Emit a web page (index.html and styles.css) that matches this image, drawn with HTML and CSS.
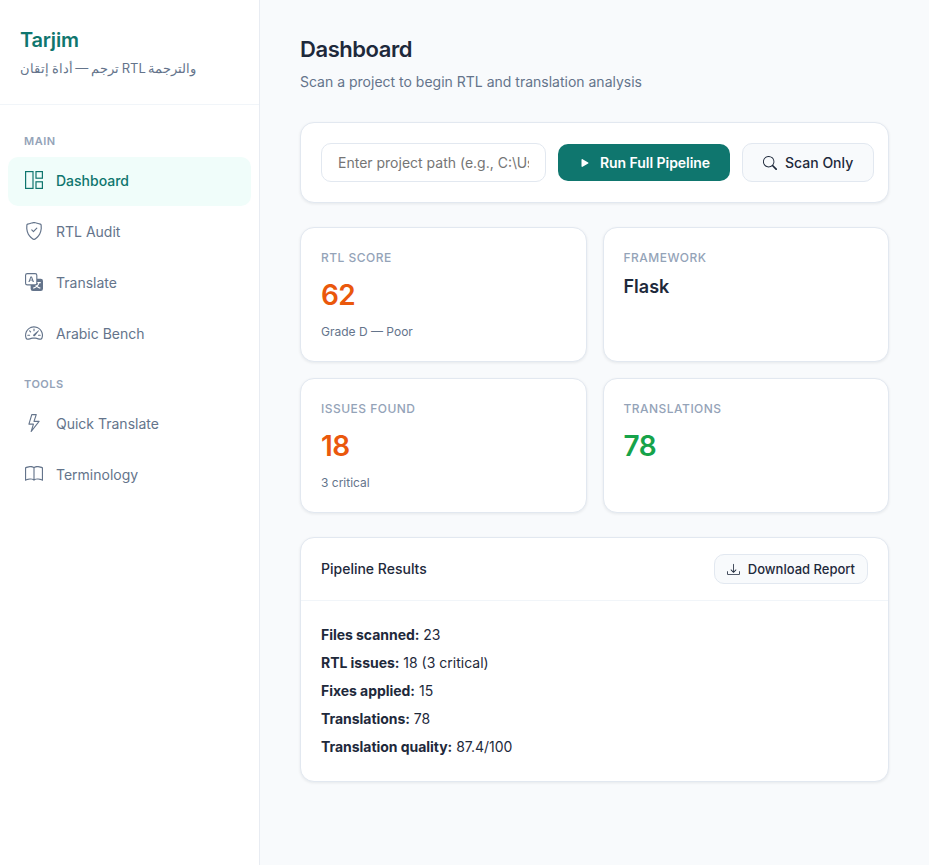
FILE: index.html
```html
<!DOCTYPE html>
<html lang="en">
<head>
<meta charset="utf-8">
<title>Tarjim Dashboard</title>
<link rel="stylesheet" href="styles.css">
</head>
<body>
<div class="app">
  <aside class="sidebar">
    <div class="brand">
      <div class="brand-name">Tarjim</div>
      <div class="brand-sub" dir="rtl">والترجمة RTL ترجم — أداة إتقان</div>
    </div>
    <nav class="nav">
      <div class="nav-label">Main</div>
      <a class="nav-item active">
        <svg class="nav-icon" viewBox="0 0 18 18" fill="none" stroke="currentColor" stroke-width="1.2"><rect x="0.6" y="0.6" width="7.4" height="16.8"/><rect x="11" y="0.6" width="6.4" height="6.6"/><rect x="11" y="10.8" width="6.4" height="6.6"/></svg>
        <span>Dashboard</span>
      </a>
      <a class="nav-item">
        <svg class="nav-icon" viewBox="0 0 16 16" fill="currentColor"><path d="M5.338 1.59a61 61 0 0 0-2.837.856.48.48 0 0 0-.328.39c-.554 4.157.726 7.19 2.253 9.188a10.7 10.7 0 0 0 2.287 2.233c.346.244.652.42.893.533q.18.085.293.118a1 1 0 0 0 .101.025 1 1 0 0 0 .1-.025q.114-.034.294-.118c.24-.113.547-.29.893-.533a10.7 10.7 0 0 0 2.287-2.233c1.527-1.997 2.807-5.031 2.253-9.188a.48.48 0 0 0-.328-.39c-.651-.213-1.75-.56-2.837-.855C9.552 1.29 8.531 1.067 8 1.067c-.53 0-1.552.223-2.662.524zM5.072.56C6.157.265 7.31 0 8 0s1.843.265 2.928.56c1.11.3 2.229.655 2.887.87a1.54 1.54 0 0 1 1.044 1.262c.596 4.477-.787 7.795-2.465 9.99a11.8 11.8 0 0 1-2.517 2.453 7 7 0 0 1-1.048.625c-.28.132-.581.24-.829.24s-.548-.108-.829-.24a7 7 0 0 1-1.048-.625 11.8 11.8 0 0 1-2.517-2.453C1.928 10.487.545 7.169 1.141 2.692A1.54 1.54 0 0 1 2.185 1.43 63 63 0 0 1 5.072.56"/><path d="M10.854 5.146a.5.5 0 0 1 0 .708l-3 3a.5.5 0 0 1-.708 0l-1.5-1.5a.5.5 0 1 1 .708-.708L7.5 7.793l2.646-2.647a.5.5 0 0 1 .708 0"/></svg>
        <span>RTL Audit</span>
      </a>
      <a class="nav-item">
        <svg class="nav-icon" viewBox="0 0 16 16" fill="currentColor"><path d="M4.545 6.714 4.11 8H3l1.862-5h1.284L8 8H6.833l-.435-1.286zm1.634-.736L5.5 3.956h-.049l-.679 2.022z"/><path d="M0 2a2 2 0 0 1 2-2h7a2 2 0 0 1 2 2v3h3a2 2 0 0 1 2 2v7a2 2 0 0 1-2 2H7a2 2 0 0 1-2-2v-3H2a2 2 0 0 1-2-2zm2-1a1 1 0 0 0-1 1v7a1 1 0 0 0 1 1h7a1 1 0 0 0 1-1V2a1 1 0 0 0-1-1zm7.138 9.995q.289.451.63.846c-.748.575-1.673 1.001-2.768 1.292.178.217.451.635.555.867 1.125-.359 2.08-.844 2.886-1.494.777.665 1.739 1.165 2.93 1.472.133-.254.414-.673.629-.89-1.125-.253-2.057-.694-2.82-1.284.681-.747 1.222-1.651 1.621-2.757H14V8h-3v1.047h.765c-.318.844-.74 1.546-1.272 2.13a6 6 0 0 1-.415-.492 2 2 0 0 1-.94.31"/></svg>
        <span>Translate</span>
      </a>
      <a class="nav-item">
        <svg class="nav-icon" viewBox="0 0 16 16" fill="currentColor"><path d="M8 4a.5.5 0 0 1 .5.5V6a.5.5 0 0 1-1 0V4.5A.5.5 0 0 1 8 4M3.732 5.732a.5.5 0 0 1 .707 0l.915.914a.5.5 0 1 1-.708.708l-.914-.915a.5.5 0 0 1 0-.707M2 10a.5.5 0 0 1 .5-.5h1.586a.5.5 0 0 1 0 1H2.5A.5.5 0 0 1 2 10m9.5 0a.5.5 0 0 1 .5-.5h1.5a.5.5 0 0 1 0 1H12a.5.5 0 0 1-.5-.5m.754-4.246a.39.39 0 0 0-.527-.02L7.547 9.31a.91.91 0 1 0 1.302 1.258l3.434-4.297a.39.39 0 0 0-.029-.518z"/><path d="M0 10a8 8 0 1 1 15.547 2.661c-.442 1.253-1.845 1.602-2.932 1.25C11.309 13.488 9.475 13 8 13c-1.474 0-3.31.488-4.615.911-1.087.352-2.49.003-2.932-1.25A8 8 0 0 1 0 10m8-7a7 7 0 0 0-6.603 9.329c.203.575.923.876 1.68.63C4.397 12.533 6.358 12 8 12s3.604.532 4.923.96c.757.245 1.477-.056 1.68-.631A7 7 0 0 0 8 3"/></svg>
        <span>Arabic Bench</span>
      </a>
      <div class="nav-label nav-label-second">Tools</div>
      <a class="nav-item">
        <svg class="nav-icon" viewBox="0 0 16 16" fill="currentColor"><path d="M5.52.359A.5.5 0 0 1 6 0h4a.5.5 0 0 1 .474.658L8.694 6H12.5a.5.5 0 0 1 .395.807l-7 9a.5.5 0 0 1-.873-.454L6.823 9.5H3.5a.5.5 0 0 1-.48-.641zM6.374 1 4.168 8.5H7.5a.5.5 0 0 1 .478.647L6.78 13.04 11.478 7H8a.5.5 0 0 1-.474-.658L9.306 1z"/></svg>
        <span>Quick Translate</span>
      </a>
      <a class="nav-item">
        <svg class="nav-icon" viewBox="0 0 16 16" fill="currentColor"><path d="M1 2.828c.885-.37 2.154-.769 3.388-.893 1.33-.134 2.458.063 3.112.752v9.746c-.935-.53-2.12-.603-3.213-.493-1.18.12-2.37.461-3.287.811zm7.5-.141c.654-.689 1.782-.886 3.112-.752 1.234.124 2.503.523 3.388.893v9.923c-.918-.35-2.107-.692-3.287-.81-1.094-.111-2.278-.039-3.213.492zM8 1.783C7.015.936 5.587.81 4.287.94c-1.514.153-3.042.672-3.994 1.105A.5.5 0 0 0 0 2.5v11a.5.5 0 0 0 .707.455c.882-.4 2.303-.881 3.68-1.02 1.409-.142 2.59.087 3.223.877a.5.5 0 0 0 .78 0c.633-.79 1.814-1.019 3.222-.877 1.378.139 2.8.62 3.681 1.02A.5.5 0 0 0 16 13.5v-11a.5.5 0 0 0-.293-.455c-.952-.433-2.48-.952-3.994-1.105C10.413.809 8.985.936 8 1.783"/></svg>
        <span>Terminology</span>
      </a>
    </nav>
  </aside>
  <main class="main">
    <header class="page-head">
      <h1 class="page-title">Dashboard</h1>
      <p class="page-sub">Scan a project to begin RTL and translation analysis</p>
    </header>
    <section class="card toolbar">
      <input class="path-input" type="text" placeholder="Enter project path (e.g., C:\Users\you\project)">
      <button class="btn btn-primary">
        <svg class="btn-icon" viewBox="0 0 16 16" fill="currentColor"><path d="m11.596 8.697-6.363 3.692c-.54.313-1.233-.066-1.233-.697V4.308c0-.63.692-1.01 1.233-.696l6.363 3.692a.802.802 0 0 1 0 1.393"/></svg>
        Run Full Pipeline
      </button>
      <button class="btn btn-secondary">
        <svg class="btn-icon" viewBox="0 0 16 16" fill="currentColor"><path d="M11.742 10.344a6.5 6.5 0 1 0-1.397 1.398h-.001q.044.06.098.115l3.85 3.85a1 1 0 0 0 1.415-1.414l-3.85-3.85a1 1 0 0 0-.115-.1zM12 6.5a5.5 5.5 0 1 1-11 0 5.5 5.5 0 0 1 11 0"/></svg>
        Scan Only
      </button>
    </section>
    <section class="stats">
      <div class="card stat">
        <div class="stat-label">RTL Score</div>
        <div class="stat-value warn">62</div>
        <div class="stat-note">Grade D — Poor</div>
      </div>
      <div class="card stat">
        <div class="stat-label">Framework</div>
        <div class="stat-text">Flask</div>
      </div>
      <div class="card stat">
        <div class="stat-label">Issues Found</div>
        <div class="stat-value warn">18</div>
        <div class="stat-note">3 critical</div>
      </div>
      <div class="card stat">
        <div class="stat-label">Translations</div>
        <div class="stat-value good">78</div>
      </div>
    </section>
    <section class="card results">
      <div class="results-head">
        <h2 class="results-title">Pipeline Results</h2>
        <button class="btn btn-secondary btn-small">
          <svg class="btn-icon" viewBox="0 0 16 16" fill="currentColor"><path d="M.5 9.9a.5.5 0 0 1 .5.5v2.5a1 1 0 0 0 1 1h12a1 1 0 0 0 1-1v-2.5a.5.5 0 0 1 1 0v2.5a2 2 0 0 1-2 2H2a2 2 0 0 1-2-2v-2.5a.5.5 0 0 1 .5-.5"/><path d="M7.646 11.854a.5.5 0 0 0 .708 0l3-3a.5.5 0 0 0-.708-.708L8.5 10.293V1.5a.5.5 0 0 0-1 0v8.793L5.354 8.146a.5.5 0 1 0-.708.708z"/></svg>
          Download Report
        </button>
      </div>
      <div class="results-body">
        <p><strong>Files scanned:</strong> 23</p>
        <p><strong>RTL issues:</strong> 18 (3 critical)</p>
        <p><strong>Fixes applied:</strong> 15</p>
        <p><strong>Translations:</strong> 78</p>
        <p><strong>Translation quality:</strong> 87.4/100</p>
      </div>
    </section>
  </main>
</div>
</body>
</html>
```

FILE: styles.css
```css
* { box-sizing: border-box; }
html, body { margin: 0; height: 100%; }
body { font-family: Inter, "Noto Sans", sans-serif; background: #f8fafc; color: #1e293b; overflow: hidden; }
.app { display: flex; min-height: 865px; }
.sidebar { width: 260px; flex: none; background: #fff; border-right: 1px solid #e8ecf2; }
.brand { padding: 28px 20px 24px; border-bottom: 1px solid #f1f5f9; height: 105px; }
.brand-name { font-size: 20px; line-height: 24px; font-weight: 600; letter-spacing: -0.01em; color: #0f766e; }
.brand-sub { font-size: 13px; line-height: 20px; margin-top: 6px; color: #64748b; white-space: nowrap; text-align: left; word-spacing: -1px; }
.nav { padding: 26px 8px 20px; display: flex; flex-direction: column; gap: 2px; }
.nav-label { font-size: 11px; line-height: 13px; font-weight: 600; letter-spacing: 0.5px; text-transform: uppercase; color: #94a3b8; padding: 4px 16px 7px; }
.nav-label-second { padding-top: 17px; padding-bottom: 7px; }
.nav-item { display: flex; align-items: center; gap: 12px; height: 49px; padding: 0 16px 2px; border-radius: 10px; font-size: 14px; font-weight: 400; color: #64748b; }
.nav-item.active { background: #f0fdfa; color: #0f766e; font-weight: 500; }
.nav-icon { width: 18px; height: 18px; flex: none; margin: 0 1px 1px; }
.main { flex: 1; min-width: 0; padding: 35px 40px; }
.page-title { margin: 0; font-size: 22px; line-height: 28px; font-weight: 600; letter-spacing: -0.02em; color: #1e293b; }
.page-sub { margin: 9px 0 0; font-size: 14px; line-height: 20px; color: #64748b; }
.page-head { margin-bottom: 30px; }
.card { background: #fff; border: 1px solid #e2e8f0; border-radius: 14px; box-shadow: 0 1px 3px rgba(15, 23, 42, 0.08); }
.toolbar { display: flex; align-items: center; gap: 12px; padding: 20px; height: 81px; }
.path-input { flex: none; width: 225px; height: 39px; padding: 0 16px; border: 1px solid #e2e8f0; border-radius: 10px; font: 14px Inter, sans-serif; color: #1e293b; background: #fff; }
.path-input::placeholder { color: #757575; }
.btn { display: inline-flex; align-items: center; justify-content: center; gap: 8px; border-radius: 10px; font: 500 14px Inter, sans-serif; white-space: nowrap; flex: none; }
.btn-primary { height: 37px; padding: 0 20px; background: #0f766e; border: none; color: #fff; font-weight: 600; letter-spacing: -0.05px; }
.btn-secondary { height: 39px; padding: 0 20px; background: #f8fafc; border: 1px solid #e2e8f0; color: #1e293b; }
.btn-icon { width: 14px; height: 14px; flex: none; }
.stats { display: grid; grid-template-columns: 1fr 1fr; gap: 16px; margin: 24px 0; }
.stat { height: 135px; padding: 21px 20px 20px; }
.stat-label { font-size: 12px; line-height: 18px; font-weight: 500; letter-spacing: 0.04em; text-transform: uppercase; color: #94a3b8; }
.stat-value { font-size: 28px; line-height: 36px; font-weight: 600; margin-top: 10px; letter-spacing: -0.02em; }
.stat-value.warn { color: #ea580c; }
.stat-value.good { color: #16a34a; }
.stat-text { font-size: 18px; line-height: 24px; font-weight: 600; margin-top: 8px; }
.stat-note { font-size: 12px; line-height: 18px; color: #64748b; margin-top: 10px; }
.results-head { display: flex; align-items: center; justify-content: space-between; height: 63px; padding: 0 20px; border-bottom: 1px solid #f1f5f9; }
.results-title { margin: 0 0 2px; font-size: 14px; font-weight: 500; }
.btn-small { height: 30px; padding: 0 12px; font-size: 13px; font-weight: 500; }
.btn-small .btn-icon { width: 13px; height: 13px; }
.results-body { padding: 20px; font-size: 14px; line-height: 28px; }
.results-body p { margin: 0; }
.results-body strong { font-weight: 700; letter-spacing: -0.04px; }
```
